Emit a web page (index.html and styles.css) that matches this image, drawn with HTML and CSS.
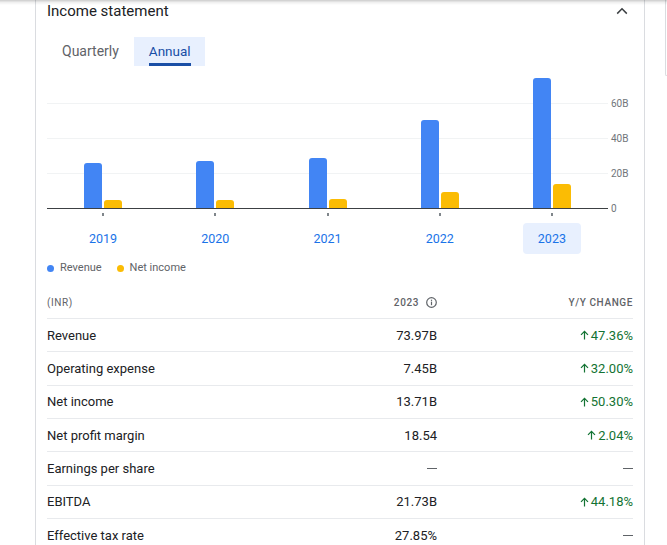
FILE: index.html
```html
<!DOCTYPE html>
<html lang="en">
<head>
<meta charset="utf-8">
<title>Income statement</title>
<link rel="stylesheet" href="styles.css">
</head>
<body>
<div class="top-shadow"></div>
<div class="page">
  <section class="card">
    <header class="card-head">
      <h2 class="title">Income statement</h2>
      <svg class="chevron" width="12" height="8" viewBox="0 0 12 8"><path d="M1.2 6.6 6 1.8l4.8 4.8" fill="none" stroke="#3c4043" stroke-width="1.5"/></svg>
    </header>

    <div class="tabs">
      <div class="tab"><span class="tab-label">Quarterly</span></div>
      <div class="tab active"><span class="tab-label">Annual</span></div>
    </div>

    <div class="chart">
      <div class="plot">
        <div class="group"><div class="bar rev" style="height:45px"></div><div class="bar ni" style="height:8px"></div></div>
        <div class="group"><div class="bar rev" style="height:47px"></div><div class="bar ni" style="height:8px"></div></div>
        <div class="group"><div class="bar rev" style="height:50px"></div><div class="bar ni" style="height:9px"></div></div>
        <div class="group"><div class="bar rev" style="height:88px"></div><div class="bar ni" style="height:16px"></div></div>
        <div class="group"><div class="bar rev" style="height:130px"></div><div class="bar ni" style="height:24px"></div></div>
      </div>
      <div class="axis">
        <div class="tick-label">60B</div>
        <div class="tick-label">40B</div>
        <div class="tick-label">20B</div>
        <div class="tick-label last">0</div>
      </div>
      <div class="years">
        <div class="year"><span class="tick"></span><span class="year-label">2019</span></div>
        <div class="year"><span class="tick"></span><span class="year-label">2020</span></div>
        <div class="year"><span class="tick"></span><span class="year-label">2021</span></div>
        <div class="year"><span class="tick"></span><span class="year-label">2022</span></div>
        <div class="year"><span class="tick"></span><span class="year-label selected">2023</span></div>
      </div>
    </div>

    <div class="legend">
      <span class="legend-item"><span class="dot dot-rev"></span>Revenue</span>
      <span class="legend-item"><span class="dot dot-ni"></span>Net income</span>
    </div>

    <div class="table">
      <div class="row head">
        <div class="cell">(INR)</div>
        <div class="cell num">2023
          <svg class="info" width="11" height="11" viewBox="0 0 11 11"><circle cx="5.5" cy="5.5" r="4.8" fill="none" stroke="#5f6368" stroke-width="1.2"/><rect x="4.9" y="4.6" width="1.2" height="3.6" fill="#5f6368"/><rect x="4.9" y="2.7" width="1.2" height="1.2" fill="#5f6368"/></svg>
        </div>
        <div class="cell num">Y/Y change</div>
      </div>
      <div class="row">
        <div class="cell label">Revenue</div>
        <div class="cell num">73.97B</div>
        <div class="cell num up"><svg class="arrow" width="9" height="10" viewBox="0 0 9 10"><path d="M4.5 9.6V1.4M1 4.8l3.5-3.5L8 4.8" fill="none" stroke="#137333" stroke-width="1.2"/></svg>47.36%</div>
      </div>
      <div class="row">
        <div class="cell label">Operating expense</div>
        <div class="cell num">7.45B</div>
        <div class="cell num up"><svg class="arrow" width="9" height="10" viewBox="0 0 9 10"><path d="M4.5 9.6V1.4M1 4.8l3.5-3.5L8 4.8" fill="none" stroke="#137333" stroke-width="1.2"/></svg>32.00%</div>
      </div>
      <div class="row">
        <div class="cell label">Net income</div>
        <div class="cell num">13.71B</div>
        <div class="cell num up"><svg class="arrow" width="9" height="10" viewBox="0 0 9 10"><path d="M4.5 9.6V1.4M1 4.8l3.5-3.5L8 4.8" fill="none" stroke="#137333" stroke-width="1.2"/></svg>50.30%</div>
      </div>
      <div class="row">
        <div class="cell label">Net profit margin</div>
        <div class="cell num">18.54</div>
        <div class="cell num up"><svg class="arrow" width="9" height="10" viewBox="0 0 9 10"><path d="M4.5 9.6V1.4M1 4.8l3.5-3.5L8 4.8" fill="none" stroke="#137333" stroke-width="1.2"/></svg>2.04%</div>
      </div>
      <div class="row">
        <div class="cell label">Earnings per share</div>
        <div class="cell num"><span class="dash"></span></div>
        <div class="cell num"><span class="dash"></span></div>
      </div>
      <div class="row">
        <div class="cell label">EBITDA</div>
        <div class="cell num">21.73B</div>
        <div class="cell num up"><svg class="arrow" width="9" height="10" viewBox="0 0 9 10"><path d="M4.5 9.6V1.4M1 4.8l3.5-3.5L8 4.8" fill="none" stroke="#137333" stroke-width="1.2"/></svg>44.18%</div>
      </div>
      <div class="row">
        <div class="cell label">Effective tax rate</div>
        <div class="cell num">27.85%</div>
        <div class="cell num"><span class="dash"></span></div>
      </div>
    </div>
  </section>
  <aside class="side"></aside>
</div>
</body>
</html>
```

FILE: styles.css
```css
* { box-sizing: border-box; }

html, body {
  margin: 0;
  padding: 0;
  background: #fff;
  font-family: Roboto, "Liberation Sans", Arial, sans-serif;
  color: #202124;
  overflow: hidden;
}

.top-shadow {
  position: fixed;
  top: 0;
  left: 0;
  right: 0;
  height: 5px;
  background: linear-gradient(to bottom, rgba(0,0,0,0.2), rgba(0,0,0,0.06) 50%, rgba(0,0,0,0));
  z-index: 5;
}

.page {
  display: flex;
  align-items: flex-start;
}

.card {
  margin-left: 35px;
  width: 610px;
  flex: none;
  border-left: 1px solid #dadce0;
  border-right: 1px solid #dadce0;
  padding: 0 11px 40px 11px;
}

.side {
  margin-left: 20px;
  flex: 1;
  height: 76px;
  border-left: 1px solid #dadce0;
  border-bottom: 1px solid #dadce0;
  border-bottom-left-radius: 8px;
}

.card-head {
  display: flex;
  justify-content: space-between;
  align-items: center;
  height: 22px;
}

.title {
  margin: 0;
  font-size: 15px;
  line-height: 22px;
  font-weight: 400;
  color: #202124;
}

.chevron {
  margin-right: 5px;
}

.tabs {
  display: flex;
  margin-top: 15px;
}

.tab {
  height: 29px;
  padding: 0 15px;
}

.tab.active {
  background: #e8f0fe;
  padding: 0 14px 0 15px;
}

.tab-label {
  display: block;
  font-size: 14px;
  line-height: 14px;
  padding-top: 7px;
  padding-bottom: 5px;
  border-bottom: 3px solid transparent;
  color: #5f6368;
}

.tab.active .tab-label {
  color: #174ea6;
  border-bottom-color: #1a4fa6;
  font-size: 13.5px;
}

.chart {
  margin-top: 3px;
  display: grid;
  grid-template-columns: 561px 25px;
  grid-template-rows: 140px auto;
}

.plot {
  grid-column: 1;
  grid-row: 1;
  height: 140px;
  display: flex;
  border-bottom: 1px solid #3c4043;
  background: repeating-linear-gradient(to bottom, transparent 0, transparent 34px, #f1f3f4 34px, #f1f3f4 35px);
}

.group {
  flex: 1;
  display: flex;
  justify-content: center;
  align-items: flex-end;
  gap: 2px;
}

.bar {
  width: 18px;
  border-radius: 3px 3px 0 0;
}

.bar.rev { background: #4285f4; }
.bar.ni { background: #fbbc04; }

.axis {
  grid-column: 2;
  grid-row: 1;
  height: 140px;
  padding-top: 29px;
  padding-left: 3px;
}

.tick-label {
  height: 35px;
  font-size: 10px;
  line-height: 12px;
  color: #70757a;
}

.tick-label.last { height: 12px; }

.years {
  grid-column: 1;
  grid-row: 2;
  display: flex;
}

.year {
  flex: 1;
  display: flex;
  flex-direction: column;
  align-items: center;
}

.tick {
  display: block;
  width: 2px;
  height: 3px;
  margin-top: 4px;
  background: #80868b;
}

.year-label {
  display: block;
  margin-top: 7px;
  width: 58px;
  height: 31px;
  line-height: 31px;
  text-align: center;
  font-size: 12.5px;
  font-weight: 400;
  color: #1a73e8;
  border-radius: 4px;
}

.year-label.selected {
  background: #e8f0fe;
}

.legend {
  display: flex;
  gap: 15px;
  margin-top: 7px;
  font-size: 11px;
  line-height: 14px;
  color: #5f6368;
}

.legend-item {
  display: flex;
  align-items: center;
  gap: 6px;
}

.dot {
  width: 7px;
  height: 7px;
  border-radius: 50%;
}

.dot-rev { background: #4285f4; }
.dot-ni { background: #fbbc04; }

.table {
  margin-top: 12px;
}

.row {
  display: grid;
  grid-template-columns: 1fr 150px 196px;
  align-items: center;
  height: 33.33px;
  border-bottom: 1px solid #e8eaed;
  font-size: 13px;
  color: #202124;
}

.row.head {
  height: 32px;
  font-size: 10px;
  letter-spacing: 0.6px;
  text-transform: uppercase;
  color: #5f6368;
  font-weight: 500;
}

.row.head .cell:first-child {
  font-weight: 400;
  text-transform: none;
}

.cell.num {
  display: flex;
  justify-content: flex-end;
  align-items: center;
  gap: 7px;
  font-weight: 400;
}

.row.head .cell.num { font-weight: 500; }

.info { flex: none; }

.cell.num.up {
  color: #137333;
  gap: 2px;
}

.arrow { flex: none; }

.dash {
  display: block;
  width: 10px;
  height: 1px;
  background: #5f6368;
}
```
